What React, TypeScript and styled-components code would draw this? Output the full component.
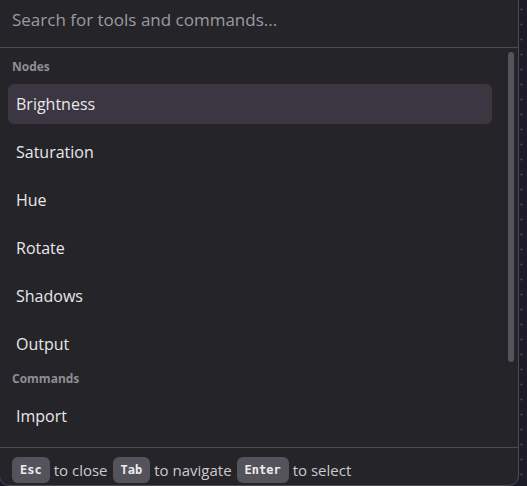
import React from "react";
import styled, { createGlobalStyle } from "styled-components";

const Global = createGlobalStyle`
  html, body {
    margin: 0;
    padding: 0;
    height: 100%;
    overflow: hidden;
  }
  body {
    background-color: #1c1b2a;
    background-image: radial-gradient(circle at 7.5px 7.5px, #3a394c 1px, transparent 1.4px);
    background-size: 15px 15px;
    background-position: 514px 2px;
    font-family: "Open Sans", "Noto Sans", sans-serif;
  }
`;

const Panel = styled.div`
  box-sizing: border-box;
  width: 520px;
  height: 487px;
  margin: -1px 0 0 -1px;
  border: 1px solid #4c4b53;
  border-radius: 0 0 10px 10px;
  background: #252429;
  display: flex;
  flex-direction: column;
  overflow: hidden;
`;

const SearchBar = styled.div`
  flex: none;
  height: 48px;
  box-sizing: border-box;
  padding: 8px 12px 0;
  border-bottom: 1px solid #4c4b53;
`;

const SearchInput = styled.input`
  width: 100%;
  box-sizing: border-box;
  border: none;
  outline: none;
  background: transparent;
  padding: 0;
  font-family: inherit;
  font-size: 17px;
  line-height: 24px;
  height: 24px;
  color: #e6e6e8;
  &::placeholder {
    color: #9c9ba2;
  }
`;

const ListArea = styled.div`
  flex: 1;
  min-height: 0;
  position: relative;
`;

const List = styled.div`
  height: 100%;
  box-sizing: border-box;
  overflow: hidden;
  padding: 12px 26px 20px 8px;
  display: flex;
  flex-direction: column;
  gap: 8px;
`;

const ScrollThumb = styled.div`
  position: absolute;
  top: 4px;
  right: 4px;
  width: 6px;
  height: 310px;
  border-radius: 3px;
  background: #55545c;
`;

const GroupLabel = styled.div`
  flex: none;
  height: 16px;
  padding: 0 4px;
  font-size: 12px;
  line-height: 14px;
  font-weight: 700;
  color: #8f8e95;
`;

const Item = styled.div<{ $active?: boolean }>`
  flex: none;
  height: 40px;
  display: flex;
  align-items: center;
  padding: 0 8px;
  border-radius: 6px;
  font-size: 16px;
  color: #e8e8ea;
  background: ${(p) => (p.$active ? "#3b3641" : "transparent")};
`;

const Footer = styled.div`
  flex: none;
  height: 38px;
  box-sizing: border-box;
  border-top: 1px solid #4c4b53;
  padding: 8px 12px 0;
  display: flex;
  align-items: flex-start;
`;

const FooterRow = styled.div`
  display: flex;
  align-items: center;
  gap: 4px;
  height: 27px;
`;

const Kbd = styled.kbd`
  height: 26px;
  box-sizing: border-box;
  padding: 0 8px;
  display: inline-flex;
  align-items: center;
  border-radius: 6px;
  background: #54535b;
  color: #ececee;
  font-family: "DejaVu Sans Mono", "Liberation Mono", monospace;
  font-weight: 700;
  font-size: 12px;
  line-height: 16px;
`;

const Hint = styled.span`
  font-size: 15px;
  line-height: 20px;
  color: #cbcbcf;
  margin-right: 1px;
`;

const nodes = ["Brightness", "Saturation", "Hue", "Rotate", "Shadows", "Output"];
const commands = ["Import", "Export", "Save"];

export default function App() {
  return (
    <>
      <Global />
      <Panel>
        <SearchBar>
          <SearchInput placeholder="Search for tools and commands..." />
        </SearchBar>
        <ListArea>
          <List>
            <GroupLabel>Nodes</GroupLabel>
            {nodes.map((n, i) => (
              <Item key={n} $active={i === 0}>
                {n}
              </Item>
            ))}
            <GroupLabel>Commands</GroupLabel>
            {commands.map((c) => (
              <Item key={c}>{c}</Item>
            ))}
          </List>
          <ScrollThumb />
        </ListArea>
        <Footer>
          <FooterRow>
            <Kbd>Esc</Kbd>
            <Hint>to close</Hint>
            <Kbd>Tab</Kbd>
            <Hint>to navigate</Hint>
            <Kbd>Enter</Kbd>
            <Hint>to select</Hint>
          </FooterRow>
        </Footer>
      </Panel>
    </>
  );
}
